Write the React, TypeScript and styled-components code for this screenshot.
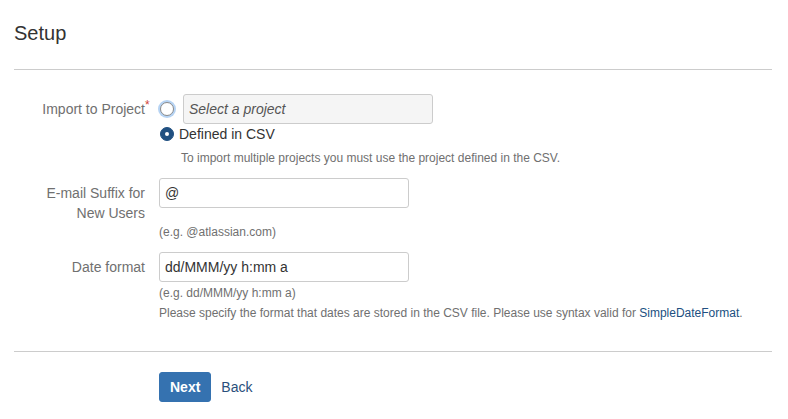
import React from "react";
import styled, { createGlobalStyle } from "styled-components";

const GlobalStyle = createGlobalStyle`
    body {
        margin: 0;
        background: #fff;
        font-family: "Liberation Sans", Arial, sans-serif;
        font-size: 14px;
        color: #333;
    }
`;

const Page = styled.div`
    padding: 0 16px 0 14px;
`;

const Header = styled.header`
    padding: 21px 0 24px;
    border-bottom: 1px solid #ccc;
`;

const Title = styled.h2`
    margin: 0;
    font-size: 20px;
    line-height: 24px;
    font-weight: normal;
    color: #333;
`;

const Form = styled.form`
    padding: 24px 0 28px;
    border-bottom: 1px solid #ccc;
`;

const FieldGroup = styled.div`
    display: grid;
    grid-template-columns: 131px 250px;
    column-gap: 14px;
    margin-bottom: 10px;

    &:last-child {
        margin-bottom: 0;
    }
`;

const Label = styled.label`
    padding: 5px 0 0 20px;
    line-height: 20px;
    text-align: right;
    color: #707070;
`;

const Required = styled.span`
    display: inline-block;
    margin-right: -7px;
    width: 7px;
    text-align: left;
    color: #d04437;
    font-size: 12px;
    vertical-align: top;
    position: relative;
    top: -4px;
`;

const Field = styled.div`
    display: flex;
    flex-direction: column;
    min-width: 0;
`;

const RadioRow = styled.div<{ $tall?: boolean }>`
    display: flex;
    align-items: center;
    height: ${(p) => (p.$tall ? "30px" : "20px")};
    width: 520px;
`;

const Radio = styled.span<{ $checked?: boolean; $focused?: boolean }>`
    flex: none;
    box-sizing: border-box;
    width: 14px;
    height: 14px;
    margin-left: 1px;
    border-radius: 50%;
    display: flex;
    align-items: center;
    justify-content: center;
    border: 1px solid ${(p) => (p.$checked ? "#205081" : "#8a8a8a")};
    background: ${(p) => (p.$checked ? "#205081" : "#fff")};
    box-shadow: ${(p) => (p.$focused ? "0 0 0 2px #b6d3f3" : "none")};

    &::after {
        content: "";
        display: ${(p) => (p.$checked ? "block" : "none")};
        width: 4px;
        height: 4px;
        border-radius: 50%;
        background: #fff;
    }
`;

const RadioText = styled.span`
    margin-left: 5px;
    line-height: 20px;
    color: #333;
`;

const TextInput = styled.input<{ $disabled?: boolean }>`
    box-sizing: border-box;
    width: 250px;
    height: 30px;
    padding: 4px 5px;
    margin: 0;
    border: 1px solid #ccc;
    border-radius: 3px;
    font-family: "Liberation Sans", Arial, sans-serif;
    font-size: 14px;
    color: #333;
    background: ${(p) => (p.$disabled ? "#f5f5f5" : "#fff")};
    font-style: ${(p) => (p.$disabled ? "italic" : "normal")};
    outline: none;

    &::placeholder {
        color: #555;
        opacity: 1;
    }
`;

const SelectInput = styled(TextInput)`
    margin-left: 9px;
`;

const Description = styled.div<{ $top?: number; $indent?: number }>`
    margin-top: ${(p) => p.$top ?? 0}px;
    padding-left: ${(p) => p.$indent ?? 0}px;
    font-size: 12px;
    line-height: 20px;
    color: #707070;
    white-space: nowrap;
`;

const Link = styled.a`
    color: #205081;
    text-decoration: none;
`;

const Buttons = styled.div`
    display: flex;
    align-items: center;
    gap: 10px;
    padding: 20px 0 0 145px;
`;

const PrimaryButton = styled.button`
    height: 30px;
    padding: 0 10px;
    border: 1px solid #3572b0;
    border-radius: 3px;
    background: #3572b0;
    color: #fff;
    font-family: "Liberation Sans", Arial, sans-serif;
    font-size: 14px;
    font-weight: bold;
`;

const LinkButton = styled.a`
    color: #2a4f7c;
    font-size: 14px;
    text-decoration: none;
`;

export default function App() {
    return (
        <>
            <GlobalStyle />
            <Page>
                <Header>
                    <Title>Setup</Title>
                </Header>
                <Form>
                    <FieldGroup>
                        <Label>
                            Import to Project<Required>*</Required>
                        </Label>
                        <Field>
                            <RadioRow $tall>
                                <Radio $focused />
                                <SelectInput $disabled placeholder="Select a project" readOnly />
                            </RadioRow>
                            <RadioRow>
                                <Radio $checked />
                                <RadioText>Defined in CSV</RadioText>
                            </RadioRow>
                            <Description $top={4} $indent={22}>
                                To import multiple projects you must use the project defined in the CSV.
                            </Description>
                        </Field>
                    </FieldGroup>
                    <FieldGroup>
                        <Label>E-mail Suffix for New Users</Label>
                        <Field>
                            <TextInput defaultValue="@" />
                            <Description $top={14}>(e.g. @atlassian.com)</Description>
                        </Field>
                    </FieldGroup>
                    <FieldGroup>
                        <Label>Date format</Label>
                        <Field>
                            <TextInput defaultValue="dd/MMM/yy h:mm a" />
                            <Description $top={1}>(e.g. dd/MMM/yy h:mm a)</Description>
                            <Description>
                                Please specify the format that dates are stored in the CSV file. Please use syntax valid for{" "}
                                <Link href="#">SimpleDateFormat</Link>.
                            </Description>
                        </Field>
                    </FieldGroup>
                </Form>
                <Buttons>
                    <PrimaryButton type="button">Next</PrimaryButton>
                    <LinkButton href="#">Back</LinkButton>
                </Buttons>
            </Page>
        </>
    );
}
